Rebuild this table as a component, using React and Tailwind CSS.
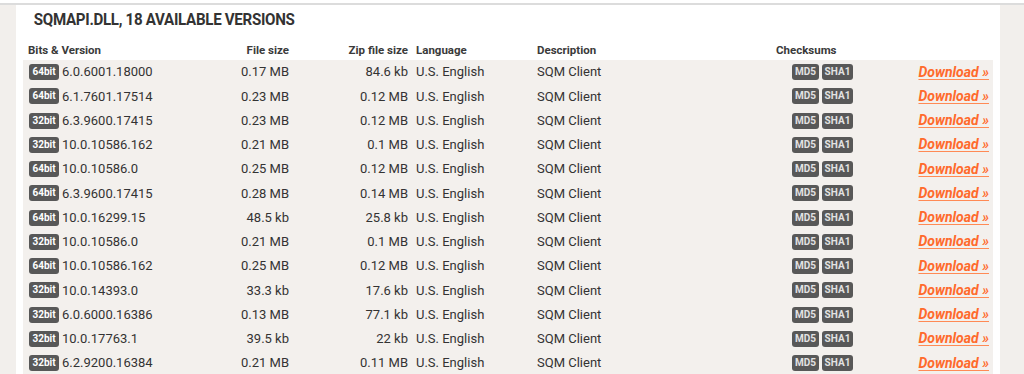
const rows = [
  ["64bit", "6.0.6001.18000", "0.17 MB", "84.6 kb"],
  ["64bit", "6.1.7601.17514", "0.23 MB", "0.12 MB"],
  ["32bit", "6.3.9600.17415", "0.23 MB", "0.12 MB"],
  ["32bit", "10.0.10586.162", "0.21 MB", "0.1 MB"],
  ["64bit", "10.0.10586.0", "0.25 MB", "0.12 MB"],
  ["64bit", "6.3.9600.17415", "0.28 MB", "0.14 MB"],
  ["64bit", "10.0.16299.15", "48.5 kb", "25.8 kb"],
  ["32bit", "10.0.10586.0", "0.21 MB", "0.1 MB"],
  ["64bit", "10.0.10586.162", "0.25 MB", "0.12 MB"],
  ["32bit", "10.0.14393.0", "33.3 kb", "17.6 kb"],
  ["32bit", "6.0.6000.16386", "0.13 MB", "77.1 kb"],
  ["32bit", "10.0.17763.1", "39.5 kb", "22 kb"],
  ["32bit", "6.2.9200.16384", "0.21 MB", "0.11 MB"],
];

function Badge({ children, className = "" }) {
  return (
    <span
      className={`inline-flex items-center justify-center h-[16px] rounded-[3px] bg-[#585858] text-[10px] font-bold leading-none ${className}`}
    >
      {children}
    </span>
  );
}

export default function App() {
  return (
    <div className="w-[1024px] h-[374px] overflow-hidden bg-white pt-[3px] font-['Roboto',sans-serif] text-[#333]">
      <div className="flex h-full border-t-2 border-[#dcdcdc]">
        <div className="w-[16px] bg-[#f2efec]" />
        <div className="w-[984px] bg-white">
          <h1 className="pl-[20px] pt-[2px] h-[37px] text-[17px] font-bold uppercase tracking-[-0.35px] text-[#333] font-['Liberation_Sans_Narrow','Roboto',sans-serif] leading-[24px] scale-x-[0.89] origin-left">
            SQMAPI.DLL, 18 available versions
          </h1>
          <div className="px-[7px]">
            <div className="flex h-[18px] items-center text-[11.5px] font-bold text-[#3a3a3a]">
              <div className="w-[167px] pl-[5px]">Bits &amp; Version</div>
              <div className="w-[103px] text-right pr-[4px]">File size</div>
              <div className="w-[119px] text-right pr-[4px]">Zip file size</div>
              <div className="w-[121px] pl-[4px]">Language</div>
              <div className="w-[239px] pl-[4px]">Description</div>
              <div className="w-[100px] pl-[4px]">Checksums</div>
              <div className="flex-1" />
            </div>
            <div className="bg-[#f3f0ed]">
              {rows.map((r, i) => (
                <div key={i} className="flex h-[24.25px] items-center text-[13px]">
                  <div className="w-[167px] pl-[6px] flex items-center gap-[3px]">
                    <Badge className="w-[30px] text-white font-['Liberation_Sans_Narrow','Roboto',sans-serif]">
                      {r[0]}
                    </Badge>
                    <span>{r[1]}</span>
                  </div>
                  <div className="w-[103px] text-right pr-[4px]">{r[2]}</div>
                  <div className="w-[119px] text-right pr-[4px]">{r[3]}</div>
                  <div className="w-[121px] pl-[4px]">U.S. English</div>
                  <div className="w-[239px] pl-[4px]">SQM Client</div>
                  <div className="w-[100px] pl-[20px] flex items-center gap-[3px]">
                    <Badge className="w-[27px] text-[#e2e2e2]">MD5</Badge>
                    <Badge className="w-[31px] text-[#e2e2e2]">SHA1</Badge>
                  </div>
                  <div className="flex-1 text-right pr-[4px]">
                    <a className="text-[14px] font-bold italic text-[#ff6a2c] underline decoration-[#ff8a55] underline-offset-[2px]">
                      Download »
                    </a>
                  </div>
                </div>
              ))}
            </div>
          </div>
        </div>
        <div className="flex-1 bg-[#f2efec]" />
      </div>
    </div>
  );
}
